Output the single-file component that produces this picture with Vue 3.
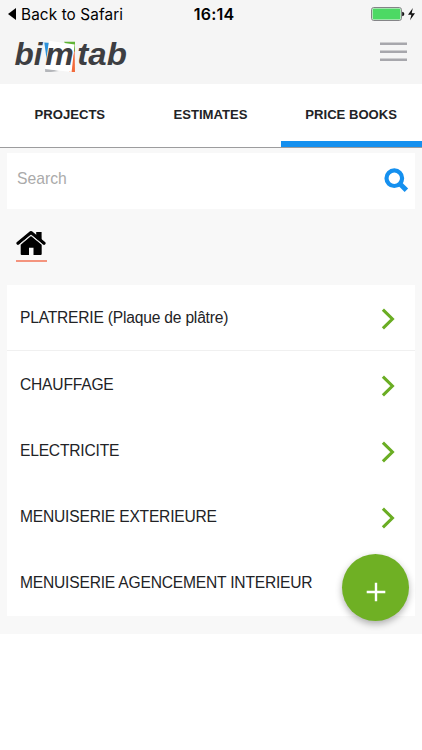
<script setup>
const tabs = [
  { label: 'PROJECTS', active: false },
  { label: 'ESTIMATES', active: false },
  { label: 'PRICE BOOKS', active: true },
]
const books = [
  'PLATRERIE (Plaque de plâtre)',
  'CHAUFFAGE',
  'ELECTRICITE',
  'MENUISERIE EXTERIEURE',
  'MENUISERIE AGENCEMENT INTERIEUR',
]
</script>

<template>
  <div class="screen">
    <header class="top">
      <div class="status">
        <div class="back">
          <svg width="8" height="12" viewBox="0 0 8 12"><path d="M8 0V12L0 6Z" fill="#000" /></svg>
          <span>Back to Safari</span>
        </div>
        <div class="time">16:14</div>
        <div class="power">
          <svg width="45" height="16" viewBox="0 0 45 16">
            <rect x=".6" y="1.6" width="29.8" height="12.8" rx="2" fill="#fff" stroke="#77777a" stroke-width="1" />
            <rect x="1.6" y="2.6" width="27.8" height="10.8" rx="1" fill="#4cd964" />
            <path d="M31.2 5.8q2.2 .2 2.2 2.2t-2.2 2.2Z" fill="#111" />
            <path d="M41.8 2L37 8.8H40.4L39 14.2L44 7.2H40.7Z" fill="#111" />
          </svg>
        </div>
      </div>
      <div class="brand">
        <svg class="logo" width="120" height="46" viewBox="0 -6 120 46">
          <path d="M31.3 4.6L38 5L34 24Z" fill="#2c92dc" />
          <path d="M51 3.8H62V14L55 10Z" fill="#60b435" />
          <path d="M61.6 11L62 34H56Z" fill="#f26b3c" />
          <path d="M32 30L46 33L38 34H32.2Z" fill="#b4b6ba" />
          <path d="M36 2.7L61.6 6.5L58.6 34L32 31Z" fill="#fff" />
          <g class="wordmark">
            <text x="1.5" y="27.3" textLength="28" lengthAdjust="spacingAndGlyphs">bi</text>
            <text x="32.2" y="27.3" textLength="28.5" lengthAdjust="spacingAndGlyphs">m</text>
            <text x="64.3" y="27.3" textLength="49.5" lengthAdjust="spacingAndGlyphs">tab</text>
          </g>
        </svg>
        <svg class="burger" width="27" height="20" viewBox="0 0 27 20"><path d="M0 1.8H27M0 9.8H27M0 17.8H27" stroke="#a7a7ac" stroke-width="2.4" /></svg>
      </div>
    </header>

    <nav class="tabs">
      <div v-for="t in tabs" :key="t.label" class="tab" :class="{ active: t.active }">{{ t.label }}</div>
    </nav>

    <main class="content">
      <div class="search">
        <span>Search</span>
        <svg width="25" height="25" viewBox="0 0 25 25" fill="none" stroke="#1590ef">
          <circle cx="10.3" cy="10.2" r="7.8" stroke-width="4.2" />
          <path d="M15.8 15.8L22.4 22.2" stroke-width="5" />
        </svg>
      </div>
      <div class="crumbs">
        <div class="home">
          <svg width="30" height="26" viewBox="0 0 30 26">
            <path d="M4.7 14.8L15 6L25.7 14.8V24Q25.7 25 24.7 25H17.5V17.8H13V25H5.7Q4.7 25 4.7 24Z" fill="#000" />
            <path d="M2 13.2L15 2.6L28 13.2" fill="none" stroke="#000" stroke-width="3.2" stroke-linejoin="round" stroke-linecap="round" />
            <path d="M2.8 15.1L15 5.2L27.2 15.1" fill="none" stroke="#dedede" stroke-width="1" />
            <path d="M20.2 2H25.6V10.5L20.2 6.2Z" fill="#000" />
          </svg>
        </div>
      </div>
      <div class="list">
        <div v-for="b in books" :key="b" class="row">
          <span>{{ b }}</span>
          <svg width="14" height="22" viewBox="0 0 14 22"><path d="M1.9 1.7L11.4 11L1.9 20.3" fill="none" stroke="#6aad23" stroke-width="3.1" /></svg>
        </div>
      </div>
      <div class="fab">
        <svg width="20" height="20" viewBox="0 0 20 20"><path d="M10 .7V19.3M.7 10H19.3" stroke="#fff" stroke-width="2.4" /></svg>
      </div>
    </main>
  </div>
</template>

<style>
body { margin: 0; background: #fff; }
</style>

<style scoped>
.screen { width: 422px; height: 750px; overflow: hidden; background: #fff; color: #222326; font-family: "Liberation Sans", Arial, sans-serif; }
svg { display: block; flex: none; }
.top { height: 84px; background: #f5f5f5; }
.status { height: 28px; display: grid; grid-template-columns: 1fr auto 1fr; align-items: center; box-sizing: border-box; padding: 0 6px 0 8px; color: #000; font-family: Inter, sans-serif; }
.back { display: flex; align-items: center; gap: 5px; font-size: 15.3px; white-space: nowrap; letter-spacing: .12px; }
.time { padding-left: 4px; font-size: 16px; font-weight: 600; letter-spacing: .2px; }
.power { justify-self: end; }
.brand { height: 56px; display: flex; justify-content: space-between; align-items: flex-start; box-sizing: border-box; padding: 4px 15px 0 13px; }
.wordmark { font: italic bold 31px "Liberation Sans", Arial, sans-serif; fill: #3d3e42; }
.burger { margin-top: 9.5px; }
.tabs { height: 64px; box-sizing: border-box; display: grid; grid-template-columns: 1fr 1fr 1fr; border-bottom: 1px solid #9c9c9e; }
.tab { display: flex; align-items: center; justify-content: center; box-sizing: border-box; padding: 4px 1px 0 0; border-bottom: 6px solid transparent; font-size: 13.1px; font-weight: 700; }
.tab.active { border-bottom-color: #1590ef; }
.content { position: relative; height: 486px; box-sizing: border-box; padding: 5px 7px 18px; background: #f8f8f8; }
.search { height: 56px; box-sizing: border-box; padding: 0 6px 4px 10px; display: flex; align-items: center; justify-content: space-between; background: #fff; color: #aaa; font-size: 15.7px; }
.search svg { margin-top: 2px; }
.crumbs { height: 76px; box-sizing: border-box; padding: 21px 9px 0; display: flex; align-items: flex-start; }
.home { width: 31px; height: 32px; box-sizing: border-box; border-bottom: 2px solid #f4947e; }
.list { height: 331px; background: #fff; }
.row { height: 66px; box-sizing: border-box; padding: 1px 20px 0 13px; display: flex; align-items: center; justify-content: space-between; font-size: 15.6px; letter-spacing: -.2px; }
.row:first-child { border-bottom: 1px solid #f0f0f0; }
.row svg { margin-top: 2px; }
.row:last-child svg { visibility: hidden; }
.fab { position: absolute; left: 342px; top: 406px; width: 67px; height: 67px; border-radius: 50%; display: flex; align-items: center; justify-content: center; padding-top: 8px; box-sizing: border-box; background: #6fb024; box-shadow: 0 3px 7px rgba(0, 0, 0, .3); }
</style>
